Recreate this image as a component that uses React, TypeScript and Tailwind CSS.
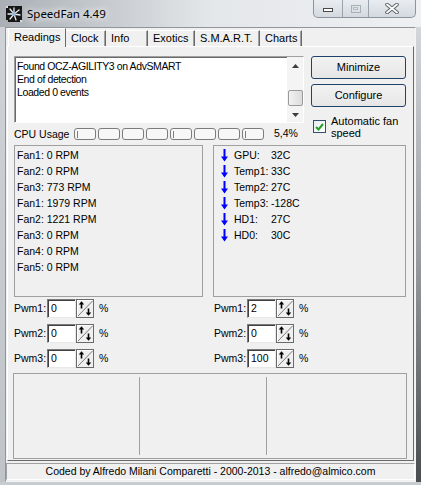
import React from 'react';

const fans = [
  'Fan1: 0 RPM',
  'Fan2: 0 RPM',
  'Fan3: 773 RPM',
  'Fan1: 1979 RPM',
  'Fan2: 1221 RPM',
  'Fan3: 0 RPM',
  'Fan4: 0 RPM',
  'Fan5: 0 RPM',
];

const temps = [
  ['GPU:', '32C'],
  ['Temp1:', '33C'],
  ['Temp2:', '27C'],
  ['Temp3:', '-128C'],
  ['HD1:', '27C'],
  ['HD0:', '30C'],
];

const tabs = [
  { label: 'Clock', w: 'w-[40px]' },
  { label: 'Info', w: 'w-[42px]' },
  { label: 'Exotics', w: 'w-[47px]' },
  { label: 'S.M.A.R.T.', w: 'w-[65px]' },
  { label: 'Charts', w: 'w-[42px]' },
];

const cpuTicks = [true, false, false, false, true, false, false, true];

function FanIcon() {
  return (
    <svg width="16" height="16" viewBox="0 0 16 16" className="block">
      <rect width="16" height="16" fill="#161616" />
      <g stroke="#e8eef4" strokeWidth="1.3" strokeLinecap="round">
        <path d="M8 8 L8 2" />
        <path d="M8 8 L13 4" />
        <path d="M8 8 L14 9" />
        <path d="M8 8 L10 14" />
        <path d="M8 8 L4 13" />
        <path d="M8 8 L2 8" />
        <path d="M8 8 L4 3" />
      </g>
      <circle cx="8" cy="8" r="2" fill="#9ab8d8" />
      <rect x="0" y="0" width="2" height="2" fill="#ddd" />
      <rect x="14" y="14" width="2" height="2" fill="#ddd" />
      <rect x="0" y="14" width="2" height="2" fill="#aaa" />
    </svg>
  );
}

function DownArrow() {
  return (
    <svg width="7" height="13" viewBox="0 0 7 13" className="block">
      <path d="M3.5 0 L3.5 9" stroke="#0000ff" strokeWidth="2" />
      <path d="M0 7.5 L7 7.5 L3.5 12.5 Z" fill="#0000ff" />
    </svg>
  );
}

function Spin() {
  return (
    <svg width="18" height="19" viewBox="0 0 18 19" className="block">
      <rect x="0.5" y="0.5" width="17" height="18" fill="#f0f0f0" stroke="#6a6a6a" />
      <path d="M1.5 17 L1.5 1.5 L16 1.5" stroke="#ffffff" fill="none" />
      <path d="M2 17 L16.5 2" stroke="#7a7a7a" />
      <path d="M5.5 4 L5.5 9.5" stroke="#000" strokeWidth="1.6" />
      <path d="M2.8 5.6 L5.5 2.3 L8.2 5.6 Z" fill="#000" />
      <path d="M12.5 9.5 L12.5 15" stroke="#000" strokeWidth="1.6" />
      <path d="M9.8 13.4 L12.5 16.7 L15.2 13.4 Z" fill="#000" />
    </svg>
  );
}

function PwmRow({ label, value }: { label: string; value: string }) {
  return (
    <div className="flex h-[19px] items-center">
      <span className="w-[33px]">{label}</span>
      <div className="h-[19px] w-[29px] border border-t-[#7a7a7a] border-l-[#7a7a7a] border-r-[#e8e8e8] border-b-[#e8e8e8] bg-white pl-[3px] leading-[17px] shadow-[inset_1px_1px_0_#404040]">
        {value}
      </div>
      <Spin />
      <span className="ml-[5px]">%</span>
    </div>
  );
}

export default function App() {
  return (
    <div className="flex h-[485px] w-[421px] flex-col overflow-hidden bg-gradient-to-b from-[#dde1e5] to-[#c7ccd1] font-['Liberation_Sans',Arial,sans-serif] text-[10.5px] text-black">
      {/* title bar */}
      <div className="flex h-[27px] shrink-0 items-start justify-between bg-gradient-to-r from-[#a9afb5] via-[#e4e7ea] to-[#eef0f2]">
        <div className="flex items-center pl-[6px] pt-[6px]">
          <FanIcon />
          <span className="ml-[5px] font-['Noto_Sans',sans-serif] text-[11.5px] leading-[16px] [text-shadow:0_0_6px_#fff,0_0_10px_#fff]">
            SpeedFan 4.49
          </span>
        </div>
        <div className="mr-[5px] flex h-[18px] overflow-hidden rounded-b-[5px] border border-t-0 border-[#8c959e] bg-gradient-to-b from-[#e9edf1] to-[#d3d9df]">
          <div className="flex w-[29px] items-center justify-center border-r border-[#9aa3ac]">
            <div className="mt-[3px] h-[4px] w-[10px] border border-[#4a4a4a] bg-white" />
          </div>
          <div className="flex w-[26px] items-center justify-center border-r border-[#9aa3ac]">
            <div className="flex h-[8px] w-[10px] items-center justify-center border border-[#a9b0b7]">
              <div className="h-[3px] w-[5px] border border-[#b5bcc3]" />
            </div>
          </div>
          <div className="flex w-[46px] items-center justify-center">
            <svg width="14" height="11" viewBox="0 0 14 11">
              <path d="M2 1.5 L12 9.5 M12 1.5 L2 9.5" stroke="#5b5f64" strokeWidth="3.6" strokeLinecap="round" />
              <path d="M2 1.5 L12 9.5 M12 1.5 L2 9.5" stroke="#ffffff" strokeWidth="1.8" strokeLinecap="round" />
            </svg>
          </div>
        </div>
      </div>

      <div className="flex h-[455px] shrink-0">
        <div className="w-[5px] bg-gradient-to-b from-[#cfd3d7] to-[#bfc4c9]" />
        {/* client */}
        <div className="flex w-[411px] flex-col border border-t-[#8f959b] border-l-[#8f959b] border-r-[#f4f4f4] border-b-[#f4f4f4] bg-[#f0f0f0]">
          {/* tab strip */}
          <div className="mx-[1px] flex h-[18px] items-end pl-[1px] text-[11px]">
            <div className="relative z-10 -mb-px h-[19px] w-[58px] border-l border-t border-r border-l-white border-t-white border-r-[#696969] bg-[#f0f0f0] pl-[5px] leading-[16px]">
              Readings
            </div>
            {tabs.map((t) => (
              <div
                key={t.label}
                className={`h-[16px] ${t.w} border-t border-r border-t-white border-r-[#696969] pl-[5px] leading-[15px] shadow-[inset_-1px_0_0_#a0a0a0]`}
              >
                {t.label}
              </div>
            ))}
          </div>

          {/* tab page */}
          <div className="mx-[1px] flex h-[415px] flex-col border border-t-white border-l-white border-r-[#696969] border-b-[#696969] px-[6px] pt-[9px]">
            <div className="flex h-[67px] items-start gap-[7px]">
              {/* log */}
              <div className="flex h-[67px] w-[290px] border border-t-[#a0a0a0] border-l-[#a0a0a0] border-r-white border-b-white bg-white shadow-[inset_1px_1px_0_#696969]">
                <div className="flex-1 pl-[2px] pt-[3px] leading-[13px] tracking-[-0.4px]">
                  <div>Found OCZ-AGILITY3 on AdvSMART</div>
                  <div>End of detection</div>
                  <div>Loaded 0 events</div>
                </div>
                <div className="flex w-[16px] flex-col items-center bg-[#f4f4f4] pt-[1px]">
                  <div className="flex h-[16px] items-center">
                    <svg width="7" height="4" viewBox="0 0 7 4">
                      <path d="M0 4 L3.5 0 L7 4 Z" fill="#3c3c3c" />
                    </svg>
                  </div>
                  <div className="mt-[16px] h-[16px] w-[15px] rounded-[2px] border border-[#9a9a9a] bg-gradient-to-r from-[#f2f2f2] to-[#dcdcdc]" />
                  <div className="mt-[4px] flex h-[10px] items-center">
                    <svg width="7" height="4" viewBox="0 0 7 4">
                      <path d="M0 0 L3.5 4 L7 0 Z" fill="#3c3c3c" />
                    </svg>
                  </div>
                </div>
              </div>
              {/* buttons */}
              <div className="flex w-[95px] flex-col">
                <button className="h-[23px] rounded-[3px] border border-[#1e4269] bg-gradient-to-b from-[#f2f2f2] to-[#e6e6e6] text-center text-[11px] leading-[21px]">
                  Minimize
                </button>
                <button className="mt-[5px] h-[23px] rounded-[3px] border border-[#1e4269] bg-gradient-to-b from-[#f2f2f2] to-[#e6e6e6] text-center text-[11px] leading-[21px]">
                  Configure
                </button>
                <div className="mt-[8px] flex items-start pl-[2px]">
                  <div className="mt-[5px] flex h-[13px] w-[13px] items-center justify-center border border-[#33506e] bg-gradient-to-br from-[#e8edf2] to-white">
                    <svg width="9" height="8" viewBox="0 0 9 8">
                      <path d="M1 4 L3.5 6.5 L8 1" stroke="#21a121" strokeWidth="2" fill="none" />
                    </svg>
                  </div>
                  <div className="ml-[5px] text-[11px] leading-[12px]">
                    Automatic fan
                    <br />
                    speed
                  </div>
                </div>
              </div>
            </div>

            {/* cpu */}
            <div className="mt-[5px] flex h-[12px] items-center">
              <span className="w-[60px] leading-[12px]">CPU Usage</span>
              <div className="flex gap-[2px]">
                {cpuTicks.map((on, i) => (
                  <div key={i} className="flex h-[12px] w-[22px] items-center rounded-[3px] border border-[#7c7c7c] bg-[#f7f7f7] pl-[2px]">
                    {on && <div className="h-[7px] w-px bg-[#19c419]" />}
                  </div>
                ))}
              </div>
              <span className="ml-[10px]">5,4%</span>
            </div>

            {/* panels */}
            <div className="mt-[5px] flex h-[152px] gap-[10px]">
              <div className="w-[189px] border border-[#a0a0a0] pl-[2px] pt-[1px] leading-[16px]">
                {fans.map((f, i) => (
                  <div key={i}>{f}</div>
                ))}
              </div>
              <div className="w-[193px] border border-[#a0a0a0] pl-[7px] pt-[1px] leading-[16px]">
                {temps.map(([k, v]) => (
                  <div key={k} className="flex h-[16px] items-center">
                    <DownArrow />
                    <span className="ml-[6px] w-[37px]">{k}</span>
                    <span>{v}</span>
                  </div>
                ))}
              </div>
            </div>

            {/* pwm */}
            <div className="mt-[2px] flex">
              <div className="flex w-[200px] flex-col gap-[6px]">
                <PwmRow label="Pwm1:" value="0" />
                <PwmRow label="Pwm2:" value="0" />
                <PwmRow label="Pwm3:" value="0" />
              </div>
              <div className="flex flex-col gap-[6px]">
                <PwmRow label="Pwm1:" value="2" />
                <PwmRow label="Pwm2:" value="0" />
                <PwmRow label="Pwm3:" value="100" />
              </div>
            </div>

            {/* bottom panel */}
            <div className="-ml-px mt-[5px] flex h-[86px] w-[394px] border border-[#a0a0a0] py-[3px]">
              <div className="w-[126px] border-r border-[#a0a0a0]" />
              <div className="w-[127px] border-r border-[#a0a0a0]" />
              <div className="flex-1" />
            </div>
          </div>

          {/* status bar */}
          <div className="mt-[2px] h-[17px] border border-t-[#a0a0a0] border-l-[#a0a0a0] border-r-white border-b-white text-center leading-[15px]">
            Coded by Alfredo Milani Comparetti - 2000-2013 - alfredo@almico.com
          </div>
        </div>
        <div className="w-[5px] bg-gradient-to-b from-[#d3d7db] via-[#9a9ea2] to-[#4a4d50]" />
      </div>
      <div className="flex-1" />
    </div>
  );
}
